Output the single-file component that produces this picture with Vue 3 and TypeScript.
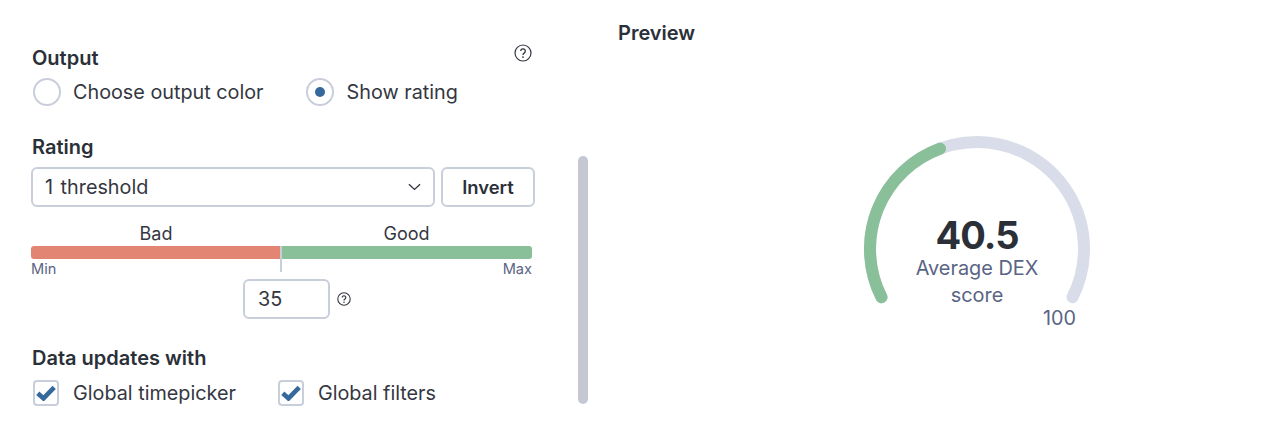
<script setup lang="ts">
const r = 107;
const pt = (deg: number) => {
  const a = (deg * Math.PI) / 180;
  return `${113 + r * Math.cos(a)} ${113 - r * Math.sin(a)}`;
};
const startDeg = 206.8;
const endDeg = -26.8;
const valueDeg = 110.2;
const track = `M ${pt(startDeg)} A ${r} ${r} 0 1 1 ${pt(endDeg)}`;
const value = `M ${pt(startDeg)} A ${r} ${r} 0 0 1 ${pt(valueDeg)}`;
</script>

<template>
  <div class="page">
    <section class="settings">
      <div class="form">
        <div class="title-row">
          <h3 class="heading">Output</h3>
          <svg class="help" viewBox="0 0 18 18" width="18" height="18">
            <circle cx="9" cy="9" r="8" fill="none" stroke="#343741" stroke-width="1.2" />
            <path d="M6.7 7.1a2.3 2.3 0 1 1 3.5 2c-.8.5-1.2.9-1.2 1.8" fill="none" stroke="#343741" stroke-width="1.3" />
            <circle cx="9" cy="13.1" r=".9" fill="#343741" />
          </svg>
        </div>
        <div class="choices radios">
          <label class="choice first-radio"><span class="radio"></span>Choose output color</label>
          <label class="choice"><span class="radio on"><i></i></span>Show rating</label>
        </div>

        <h3 class="heading rating">Rating</h3>
        <div class="select-row">
          <div class="select">
            <span>1 threshold</span>
            <svg viewBox="0 0 14 8" width="13" height="8">
              <path d="M1 1l6 5.6L13 1" fill="none" stroke="#343741" stroke-width="1.5" />
            </svg>
          </div>
          <button class="invert">Invert</button>
        </div>

        <div class="scale-labels"><span class="bad-label">Bad</span><span class="good-label">Good</span></div>
        <div class="bar">
          <div class="bad"></div>
          <div class="good"></div>
          <div class="tick"></div>
        </div>
        <div class="ends"><span>Min</span><span>Max</span></div>
        <div class="threshold">
          <div class="num">35</div>
          <svg class="help-small" viewBox="0 0 18 18" width="14" height="14">
            <circle cx="9" cy="9" r="8" fill="none" stroke="#343741" stroke-width="1.4" />
            <path d="M6.7 7.1a2.3 2.3 0 1 1 3.5 2c-.8.5-1.2.9-1.2 1.8" fill="none" stroke="#343741" stroke-width="1.5" />
            <circle cx="9" cy="13.1" r="1" fill="#343741" />
          </svg>
        </div>

        <h3 class="heading updates">Data updates with</h3>
        <div class="choices checks">
          <label class="choice first-check">
            <span class="check">
              <svg viewBox="0 0 20 16" width="20" height="16"><path d="M1.8 8.2l5.7 5.2L18.2 2.4" fill="none" stroke="#36689c" stroke-width="4.6" /></svg>
            </span>Global timepicker
          </label>
          <label class="choice">
            <span class="check">
              <svg viewBox="0 0 20 16" width="20" height="16"><path d="M1.8 8.2l5.7 5.2L18.2 2.4" fill="none" stroke="#36689c" stroke-width="4.6" /></svg>
            </span>Global filters
          </label>
        </div>
      </div>
      <div class="scrollbar"></div>
    </section>

    <section class="preview">
      <h3 class="heading preview-title">Preview</h3>
      <div class="gauge-wrap">
        <div class="gauge">
          <svg viewBox="0 0 226 226" width="226" height="226">
            <path :d="track" fill="none" stroke="#d9dde9" stroke-width="12" stroke-linecap="round" />
            <path :d="value" fill="none" stroke="#89bf99" stroke-width="12" stroke-linecap="round" />
          </svg>
          <div class="readout">
            <div class="metric">40.5</div>
            <div class="caption">Average DEX<br />score</div>
          </div>
          <div class="max">100</div>
        </div>
      </div>
    </section>
  </div>
</template>

<style>
body { margin: 0; background: #fff; }
</style>

<style scoped>
.page {
  width: 1280px;
  height: 432px;
  display: flex;
  overflow: hidden;
  font-family: Inter, "Liberation Sans", sans-serif;
  color: #343741;
  background: #fff;
}
.settings {
  width: 618px;
  flex: none;
  display: flex;
  box-sizing: border-box;
  padding: 44px 0 0 31px;
}
.form { width: 504px; flex: none; }
.heading {
  margin: 0;
  font-size: 20px;
  line-height: 28px;
  font-weight: 600;
  color: #2b2f38;
}
.title-row {
  display: flex;
  justify-content: space-between;
  align-items: flex-start;
  padding: 0 3px 0 1px;
}
.choices { display: flex; align-items: center; }
.radios { height: 40px; }
.choice {
  display: flex;
  align-items: center;
  font-size: 19.8px;
  line-height: 28px;
  color: #343741;
}
.radio {
  width: 24px;
  height: 24px;
  border: 2px solid #c9cedb;
  border-radius: 50%;
  margin: 0 12px 0 2px;
  display: flex;
  align-items: center;
  justify-content: center;
  background: #fff;
}
.radio.on { margin-right: 13px; }
.radio i { width: 10px; height: 10px; border-radius: 50%; background: #36689c; }
.first-radio { margin-right: 40px; }
.rating { margin: 21px 0 0 1px; }
.select-row { display: flex; gap: 6px; margin-top: 6px; }
.select {
  width: 404px;
  height: 40px;
  flex: none;
  box-sizing: border-box;
  border: 2px solid #c9cedb;
  border-radius: 6px;
  padding: 0 12px;
  display: flex;
  justify-content: space-between;
  align-items: center;
  font-size: 19.8px;
  word-spacing: 2px;
}
.invert {
  width: 94px;
  height: 40px;
  flex: none;
  box-sizing: border-box;
  border: 2px solid #c9cedb;
  border-radius: 6px;
  background: #fff;
  font: 600 18.4px Inter, "Liberation Sans", sans-serif;
  color: #2b2f38;
  padding: 0;
}
.scale-labels {
  display: flex;
  font-size: 18px;
  line-height: 24px;
  margin-top: 15px;
  color: #343741;
  text-align: center;
}
.bad-label { width: 250px; }
.good-label { width: 251px; }
.bar {
  position: relative;
  display: flex;
  width: 501px;
  height: 13px;
}
.bad { width: 249px; background: #e28573; border-radius: 3px 0 0 3px; }
.good { flex: 1; margin-left: 2px; background: #89bf99; border-radius: 0 3px 3px 0; }
.tick { position: absolute; left: 249px; top: 0; width: 2px; height: 26px; background: #c9cedb; }
.ends {
  display: flex;
  justify-content: space-between;
  width: 501px;
  font-size: 14.6px;
  line-height: 18px;
  color: #5a6484;
  margin-top: 1px;
}
.threshold {
  display: flex;
  align-items: center;
  gap: 7px;
  margin: 1px 0 0 212px;
  height: 40px;
}
.num {
  width: 87px;
  height: 40px;
  box-sizing: border-box;
  border: 2px solid #c9cedb;
  border-radius: 6px;
  padding-left: 13px;
  font-size: 19.8px;
  line-height: 36px;
}
.updates { margin: 25px 0 0 1px; }
.checks { margin-top: 6px; height: 30px; }
.check {
  width: 26px;
  height: 26px;
  box-sizing: border-box;
  border: 2px solid #c9cedb;
  border-radius: 4px;
  margin: 0 14px 0 2px;
  display: flex;
  align-items: center;
  justify-content: center;
}
.first-check { margin-right: 40px; }
.scrollbar {
  width: 10px;
  height: 248px;
  margin: 112px 0 0 43px;
  background: #c5c8d3;
  border-radius: 5px;
  flex: none;
}
.preview { flex: 1; padding-top: 19px; }
.preview-title { font-size: 20px; }
.gauge-wrap { padding: 89px 0 0 246px; }
.gauge { position: relative; width: 226px; height: 226px; }
.gauge svg { display: block; }
.readout {
  position: absolute;
  left: 13px;
  right: 13px;
  top: 80px;
  text-align: center;
}
.metric {
  font-size: 38px;
  line-height: 38px;
  font-weight: 700;
  letter-spacing: -1px;
  color: #2b2f38;
}
.caption {
  font-size: 19.9px;
  line-height: 27px;
  color: #5a6484;
  margin-top: 1px;
}
.max {
  position: absolute;
  left: 179px;
  top: 169px;
  font-size: 19.8px;
  line-height: 26px;
  color: #5a6484;
}
</style>
